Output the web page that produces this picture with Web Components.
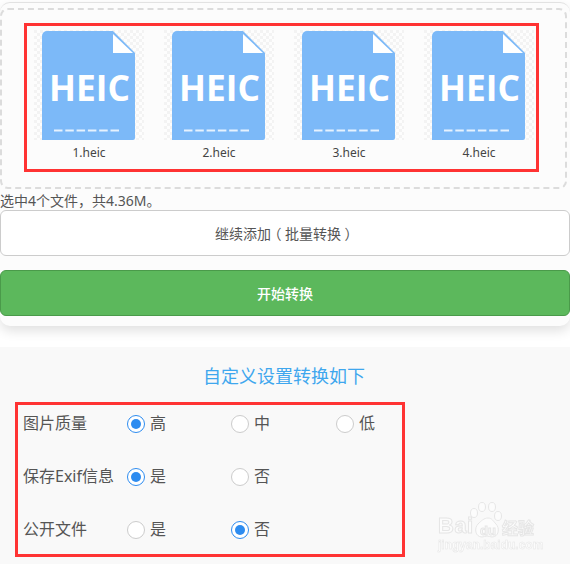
<!DOCTYPE html>
<html lang="zh">
<head>
<meta charset="utf-8">
<title>HEIC</title>
<style>
    html, body { margin: 0; padding: 0; background: #ffffff; }
    body {
        width: 570px;
        height: 564px;
        overflow: hidden;
        font-family: "Noto Sans", "Noto Sans CJK SC", sans-serif;
        color: #555555;
    }
    .paren { font-feature-settings: "halt"; padding: 0 3.5px; }
</style>
</head>
<body>
<upload-card>
    <heic-file name="1.heic"></heic-file>
    <heic-file name="2.heic"></heic-file>
    <heic-file name="3.heic"></heic-file>
    <heic-file name="4.heic"></heic-file>
    <span slot="summary">选中4个文件<span style="font-family: 'Noto Sans CJK TC'">，</span>共4.36M。</span>
    <action-button slot="actions">继续添加<span class="paren">（</span>批量转换<span class="paren">）</span></action-button>
    <action-button slot="actions" primary>开始转换</action-button>
</upload-card>
<settings-panel heading="自定义设置转换如下">
    <radio-row label="图片质量" options="高,中,低" checked="0"></radio-row>
    <radio-row label="保存Exif信息" options="是,否" checked="0"></radio-row>
    <radio-row label="公开文件" options="是,否" checked="1"></radio-row>
    <baidu-mark slot="mark"></baidu-mark>
</settings-panel>

<script>
class UploadCard extends HTMLElement {
    constructor() {
        super();
        this.attachShadow({ mode: "open" });
        this.shadowRoot.innerHTML = `
            <style>
                :host {
                    display: block;
                    box-sizing: border-box;
                    height: 324px;
                    margin-top: 2px;
                    padding-top: 5px;
                    border-top: 1px solid #e2e2e2;
                    border-radius: 10px;
                    background: #fcfcfc;
                    box-shadow: 0 5px 12px rgba(0,0,0,0.12);
                }
                .drop {
                    box-sizing: border-box;
                    width: 567px;
                    height: 181px;
                    padding-top: 13px;
                    border: 2px dashed #dcdcdc;
                    border-radius: 8px;
                }
                .picked {
                    box-sizing: border-box;
                    width: 515px;
                    height: 149px;
                    margin-left: 22px;
                    padding: 4px 0 0 7px;
                    border: 3px solid #ff3333;
                    background: #fcfcfc;
                    display: grid;
                    grid-template-columns: repeat(4, 110px);
                    column-gap: 20px;
                    align-content: start;
                }
                .summary {
                    height: 21px;
                    line-height: 23px;
                    font-size: 14px;
                    white-space: nowrap;
                }
                .actions {
                    display: flex;
                    flex-direction: column;
                    gap: 14px;
                }
            </style>
            <div class="drop"><div class="picked"><slot></slot></div></div>
            <div class="summary"><slot name="summary"></slot></div>
            <div class="actions"><slot name="actions"></slot></div>
        `;
    }
}

class HeicFile extends HTMLElement {
    constructor() {
        super();
        this.attachShadow({ mode: "open" });
    }

    connectedCallback() {
        this.shadowRoot.innerHTML = `
            <style>
                :host { display: block; width: 110px; }
                svg { display: block; }
                .name {
                    height: 20px;
                    margin-top: 3px;
                    line-height: 20px;
                    text-align: center;
                    font-size: 12px;
                    color: #444444;
                }
                text {
                    font-family: "Open Sans", "Noto Sans", sans-serif;
                    font-weight: 700;
                    font-size: 36px;
                    fill: #ffffff;
                }
            </style>
            <svg width="110" height="110" viewBox="0 0 110 110">
                <defs>
                    <pattern id="chk" width="6" height="6" patternUnits="userSpaceOnUse">
                        <rect width="6" height="6" fill="#fdfdfd"/>
                        <rect width="3" height="3" fill="#f3f3f3"/>
                        <rect x="3" y="3" width="3" height="3" fill="#f3f3f3"/>
                    </pattern>
                </defs>
                <rect width="110" height="110" fill="url(#chk)"/>
                <path d="M8 6a5 5 0 0 1 5-5H79L101 23V108a2 2 0 0 1-2 2H8Z" fill="#7cb9f8"/>
                <path d="M79 4V23H99Z" fill="#ffffff"/>
                <text x="55.5" y="70.5" text-anchor="middle" textLength="81" lengthAdjust="spacingAndGlyphs">HEIC</text>
                <path d="M20 100.5H85" stroke="#e6f2fe" stroke-width="2" stroke-dasharray="8.5 2.8"/>
            </svg>
            <div class="name">${this.getAttribute("name")}</div>
        `;
    }
}

class ActionButton extends HTMLElement {
    constructor() {
        super();
        this.attachShadow({ mode: "open" });
        this.shadowRoot.innerHTML = `
            <style>
                :host {
                    display: flex;
                    align-items: center;
                    justify-content: center;
                    box-sizing: border-box;
                    height: 46px;
                    border: 1px solid #cccccc;
                    border-radius: 6px;
                    background: #ffffff;
                    color: #555555;
                    font-size: 14px;
                }
                :host([primary]) {
                    background: #5cb85c;
                    border-color: #4a9a4a;
                    color: #ffffff;
                    font-weight: 500;
                }
            </style>
            <span><slot></slot></span>
        `;
    }
}

class SettingsPanel extends HTMLElement {
    constructor() {
        super();
        this.attachShadow({ mode: "open" });
    }

    connectedCallback() {
        this.shadowRoot.innerHTML = `
            <style>
                :host {
                    display: block;
                    position: relative;
                    box-sizing: border-box;
                    height: 217px;
                    margin-top: 21px;
                    padding-top: 19px;
                    background: #f9f9f9;
                }
                h2 {
                    margin: 0 0 16px;
                    height: 20px;
                    line-height: 20px;
                    padding-right: 2px;
                    text-align: center;
                    font-size: 18px;
                    font-weight: 400;
                    color: #3fa7ee;
                }
                .rows {
                    box-sizing: border-box;
                    width: 390px;
                    height: 155px;
                    margin-left: 15px;
                    padding: 1px 0 0 5px;
                    border: 3px solid #ff3333;
                    display: grid;
                    grid-auto-rows: 36px;
                    row-gap: 17px;
                }
            </style>
            <h2>${this.getAttribute("heading")}</h2>
            <div class="rows"><slot></slot></div>
            <slot name="mark"></slot>
        `;
    }
}

class RadioRow extends HTMLElement {
    constructor() {
        super();
        this.attachShadow({ mode: "open" });
    }

    connectedCallback() {
        const picked = Number(this.getAttribute("checked"));
        const options = this.getAttribute("options").split(",").map((text, i) => `
            <label class="option">
                <i class="dot ${i === picked ? "on" : ""}"></i><span>${text}</span>
            </label>
        `).join("");
        this.shadowRoot.innerHTML = `
            <style>
                :host {
                    display: grid;
                    grid-template-columns: 104px 104px 105px 50px;
                    align-items: center;
                    font-size: 16px;
                    color: #555555;
                }
                span { padding-bottom: 5px; white-space: nowrap; }
                .option {
                    display: flex;
                    align-items: center;
                    gap: 5px;
                }
                .dot {
                    box-sizing: border-box;
                    width: 18px;
                    height: 18px;
                    border: 1px solid #cccccc;
                    border-radius: 50%;
                    background: #ffffff;
                    display: flex;
                    align-items: center;
                    justify-content: center;
                }
                .dot.on { border-color: #2d8cf0; }
                .dot.on::after {
                    content: "";
                    width: 10px;
                    height: 10px;
                    border-radius: 50%;
                    background: #2d8cf0;
                }
            </style>
            <span>${this.getAttribute("label")}</span>
            ${options}
        `;
    }
}

// sits over the panel, like the watermark burnt into the screenshot
class BaiduMark extends HTMLElement {
    constructor() {
        super();
        this.attachShadow({ mode: "open" });
        this.shadowRoot.innerHTML = `
            <style>
                :host {
                    position: absolute;
                    left: 437px;
                    top: 155px;
                    width: 102px;
                    height: 50px;
                    font-family: "Liberation Sans", "Noto Sans CJK SC", sans-serif;
                    color: #fcfcfc;
                    -webkit-text-stroke: 1px #e6e6e6;
                    filter: blur(0.3px);
                }
                svg { position: absolute; left: 33px; top: 0; }
                span { position: absolute; white-space: nowrap; font-weight: 700; }
                .bai { left: 1px; top: 12px; font-size: 22px; line-height: 24px; letter-spacing: 0.5px; }
                .du { left: 43px; top: 22px; font-size: 13px; line-height: 14px; }
                .jy { left: 65px; top: 17px; font-size: 16px; line-height: 20px; }
                .url { left: 1px; top: 37px; font-size: 12px; line-height: 12px; -webkit-text-stroke: 0.5px #e6e6e6; }
            </style>
            <svg width="34" height="38" viewBox="0 0 34 38" fill="#fcfcfc" stroke="#e6e6e6">
                <ellipse cx="4" cy="11" rx="3.5" ry="4.5"/>
                <ellipse cx="12" cy="5" rx="3.5" ry="4.5"/>
                <ellipse cx="22" cy="5" rx="3.5" ry="4.5"/>
                <ellipse cx="28" cy="14" rx="3.5" ry="4.5"/>
                <path d="M18 16c4 0 5 3 8 6 4 4 3 13-4 13-2 0-3-1-5-1s-3 1-5 1c-7 0-8-9-4-13 3-3 6-6 10-6Z"/>
            </svg>
            <span class="bai">Bai</span>
            <span class="du">du</span>
            <span class="jy">经验</span>
            <span class="url">jingyan.baidu.com</span>
        `;
    }
}

customElements.define("upload-card", UploadCard);
customElements.define("heic-file", HeicFile);
customElements.define("action-button", ActionButton);
customElements.define("settings-panel", SettingsPanel);
customElements.define("radio-row", RadioRow);
customElements.define("baidu-mark", BaiduMark);
</script>
</body>
</html>
